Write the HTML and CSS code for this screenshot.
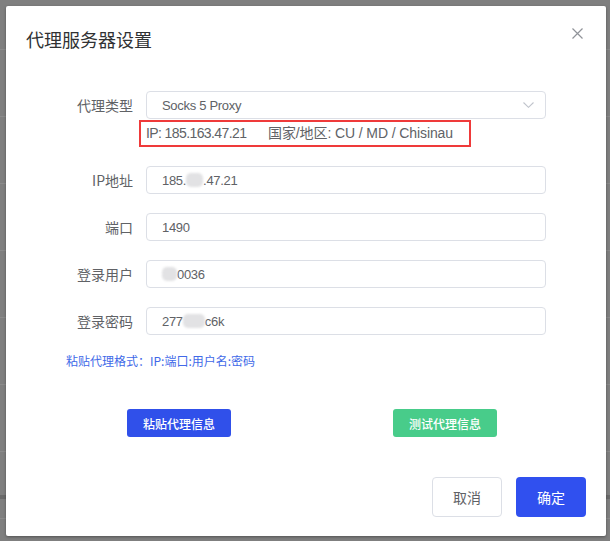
FILE: index.html
```html
<!DOCTYPE html>
<html lang="zh-CN">
<head>
<meta charset="utf-8">
<title>代理服务器设置</title>
<link rel="stylesheet" href="styles.css">
</head>
<body>
<div class="page">
  <div class="dialog">
    <div class="header">
      <h2 class="title">代理服务器设置</h2>
      <button class="close" aria-label="关闭">
        <svg width="11" height="11" viewBox="0 0 11 11"><path d="M0.5 0.5 L10.5 10.5 M10.5 0.5 L0.5 10.5" stroke="#909399" stroke-width="1.2" fill="none"/></svg>
      </button>
    </div>
    <div class="form">
      <div class="row">
        <label class="label">代理类型</label>
        <div class="field">
          <div class="select">
            <span>Socks 5 Proxy</span>
            <svg width="11" height="6" viewBox="0 0 11 6"><path d="M0.5 0.5 L5.5 5.3 L10.5 0.5" stroke="#c0c4cc" stroke-width="1.1" fill="none"/></svg>
          </div>
          <div class="info"><span class="ip">IP: 185.163.47.21</span><span class="geo">国家/地区: CU / MD / Chisinau</span></div>
        </div>
      </div>
      <div class="row">
        <label class="label">IP地址</label>
        <div class="field"><div class="input">185.<span class="blur w17"></span>.47.21</div></div>
      </div>
      <div class="row">
        <label class="label">端口</label>
        <div class="field"><div class="input">1490</div></div>
      </div>
      <div class="row">
        <label class="label">登录用户</label>
        <div class="field"><div class="input"><span class="blur w15"></span>0036</div></div>
      </div>
      <div class="row">
        <label class="label">登录密码</label>
        <div class="field"><div class="input">277<span class="blur w20"></span>c6k</div></div>
      </div>
    </div>
    <p class="hint">粘贴代理格式：IP:端口:用户名:密码</p>
    <div class="actions">
      <button class="btn-small blue">粘贴代理信息</button>
      <button class="btn-small green">测试代理信息</button>
    </div>
    <div class="footer">
      <button class="btn cancel">取消</button>
      <button class="btn primary">确定</button>
    </div>
  </div>
</div>
</body>
</html>
```
FILE: styles.css
```css
* { box-sizing: border-box; }
html, body { margin: 0; padding: 0; }
body {
  font-family: "Liberation Sans", "Noto Sans CJK SC", sans-serif;
  color: #606266;
  width: 610px;
  height: 541px;
  overflow: hidden;
}
.page {
  position: relative;
  width: 610px;
  height: 541px;
  background-color: #7f7f7f;
  background-image: repeating-linear-gradient(to bottom, transparent 0, transparent 49px, #8b8b8b 49px, #8b8b8b 50px, transparent 50px, transparent 67px);
}
.page::after {
  content: "";
  position: absolute;
  left: 0;
  right: 0;
  top: 495px;
  height: 4px;
  background: #6a6a6a;
}
.dialog {
  position: absolute;
  left: 6px;
  top: 6px;
  width: 600px;
  height: 530px;
  background: #fff;
  border-radius: 2px;
  box-shadow: 0 1px 3px rgba(0,0,0,0.35);
  z-index: 1;
}
.header {
  display: flex;
  justify-content: space-between;
  align-items: flex-start;
  padding: 21px 23px 0 20px;
}
.title {
  margin: 0;
  font-size: 18px;
  line-height: 24px;
  font-weight: normal;
  color: #303133;
  font-family: "Noto Sans CJK SC", sans-serif;
}
.close {
  border: 0;
  background: none;
  padding: 0;
  margin-top: 1px;
  width: 11px;
  height: 11px;
  display: flex;
}
.form {
  margin-top: 40px;
  display: flex;
  flex-direction: column;
  gap: 19px;
}
.row {
  display: flex;
  align-items: flex-start;
  gap: 13px;
}
.label {
  width: 127px;
  text-align: right;
  font-size: 14px;
  line-height: 28px;
  color: #606266;
  font-family: "Noto Sans CJK SC", sans-serif;
}
.field {
  width: 400px;
  display: flex;
  flex-direction: column;
  align-items: flex-start;
}
.select, .input {
  width: 400px;
  height: 28px;
  border: 1px solid #dcdfe6;
  border-radius: 4px;
  padding: 0 11px 0 15px;
  font-size: 13px;
  letter-spacing: -0.3px;
  color: #606266;
  display: flex;
  align-items: center;
}
.select {
  justify-content: space-between;
}
.info {
  margin-top: 1px;
  margin-left: -7px;
  width: 332px;
  height: 27px;
  border: 2px solid #ef3a3a;
  padding: 0 5px;
  font-size: 14px;
  line-height: 23px;
  color: #606266;
  white-space: nowrap;
  display: flex;
}
.ip {
  letter-spacing: -0.6px;
  width: 122px;
}
.geo {
  letter-spacing: -0.1px;
}
.blur {
  display: inline-block;
  height: 14px;
  background: #e2e2e4;
  border-radius: 5px;
  filter: blur(1.2px);
}
.w15 { width: 15px; }
.w17 { width: 17px; }
.w20 { width: 22px; }
.hint {
  margin: 18px 0 0 0;
  padding-left: 60px;
  font-size: 12px;
  line-height: 16px;
  color: #4169e8;
  font-family: "Noto Sans CJK SC", sans-serif;
}
.actions {
  margin-top: 40px;
  padding-left: 121px;
  display: flex;
  gap: 162px;
}
.btn-small {
  width: 104px;
  height: 28px;
  border: 0;
  border-radius: 3px;
  color: #fff;
  font-size: 12px;
  font-weight: 500;
  font-family: "Noto Sans CJK SC", sans-serif;
  padding: 0;
}
.blue { background: #3050ea; }
.green { background: #48cc8a; }
.footer {
  margin-top: 40px;
  display: flex;
  justify-content: flex-end;
  gap: 14px;
  padding-right: 20px;
}
.btn {
  width: 70px;
  height: 40px;
  border-radius: 4px;
  font-size: 14px;
  font-family: "Noto Sans CJK SC", sans-serif;
  padding: 0;
}
.cancel {
  background: #fff;
  border: 1px solid #dcdfe6;
  color: #606266;
}
.primary {
  background: #3050ef;
  border: 0;
  color: #fff;
}
```
